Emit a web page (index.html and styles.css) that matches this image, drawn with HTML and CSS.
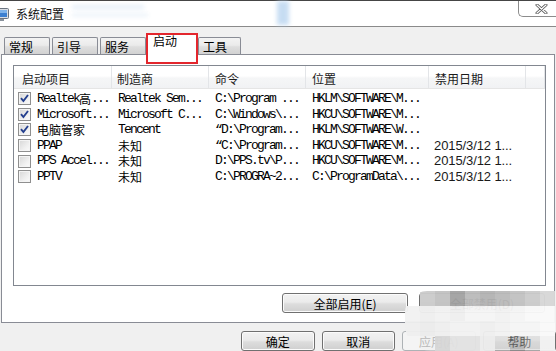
FILE: index.html
```html
<!DOCTYPE html>
<html lang="zh-CN">
<head>
<meta charset="utf-8">
<title>系统配置</title>
<link rel="stylesheet" href="styles.css">
</head>
<body>
<div class="window">
  <div class="titlebar">
    <svg class="appicon" width="16" height="14" viewBox="0 0 16 14">
      <rect x="0.5" y="0.5" width="15" height="10" rx="1" fill="#d9dde3" stroke="#6b7480"/>
      <rect x="2" y="2" width="12" height="7" fill="#3c7fd0"/>
      <rect x="2" y="2" width="12" height="3" fill="#7fb3ea"/>
      <rect x="5" y="11" width="6" height="2" fill="#8a929c"/>
    </svg>
    <span class="title">系统配置</span>
    <div class="close">
      <svg width="13" height="10" viewBox="0 0 13 10">
        <path d="M2 1 L11 9 M11 1 L2 9" stroke="#5a5a5a" stroke-width="3" stroke-linecap="round" fill="none"/>
        <path d="M2 1 L11 9 M11 1 L2 9" stroke="#ffffff" stroke-width="1.2" stroke-linecap="round" fill="none"/>
      </svg>
    </div>
    <div class="smudge sm1"></div>
    <div class="smudge sm2"></div>
    <div class="smudge sm3"></div>
  </div>

  <div class="tabs">
    <div class="tab t1">常规</div>
    <div class="tab t2">引导</div>
    <div class="tab t3">服务</div>
    <div class="tab active">启动</div>
    <div class="tab t5">工具</div>
  </div>

  <div class="panel">
    <div class="listview">
      <div class="lv-head">
        <div class="hc c1">启动项目</div>
        <div class="hc c2">制造商</div>
        <div class="hc c3">命令</div>
        <div class="hc c4">位置</div>
        <div class="hc c5">禁用日期</div>
        <div class="hc rest"></div>
      </div>
      <div class="lv-body">
        <div class="row">
          <div class="cell c1"><span class="cb on"></span>Realtek<span class="zh">高</span>...</div>
          <div class="cell c2">Realtek Sem...</div>
          <div class="cell c3">C:\Program ...</div>
          <div class="cell c4">HKLM\SOFTWARE\M...</div>
          <div class="cell c5"></div>
        </div>
        <div class="row">
          <div class="cell c1"><span class="cb on"></span>Microsoft...</div>
          <div class="cell c2">Microsoft C...</div>
          <div class="cell c3">C:\Windows\...</div>
          <div class="cell c4">HKCU\SOFTWARE\M...</div>
          <div class="cell c5"></div>
        </div>
        <div class="row">
          <div class="cell c1"><span class="cb on"></span><span class="zh">电脑管家</span></div>
          <div class="cell c2">Tencent</div>
          <div class="cell c3">“D:\Program...</div>
          <div class="cell c4">HKLM\SOFTWARE\W...</div>
          <div class="cell c5"></div>
        </div>
        <div class="row">
          <div class="cell c1"><span class="cb"></span>PPAP</div>
          <div class="cell c2"><span class="zh">未知</span></div>
          <div class="cell c3">“C:\Program...</div>
          <div class="cell c4">HKCU\SOFTWARE\M...</div>
          <div class="cell c5 date">2015/3/12 1...</div>
        </div>
        <div class="row">
          <div class="cell c1"><span class="cb"></span>PPS Accel...</div>
          <div class="cell c2"><span class="zh">未知</span></div>
          <div class="cell c3">D:\PPS.tv\P...</div>
          <div class="cell c4">HKCU\SOFTWARE\M...</div>
          <div class="cell c5 date">2015/3/12 1...</div>
        </div>
        <div class="row">
          <div class="cell c1"><span class="cb"></span>PPTV</div>
          <div class="cell c2"><span class="zh">未知</span></div>
          <div class="cell c3">C:\PROGRA~2...</div>
          <div class="cell c4">C:\ProgramData\...</div>
          <div class="cell c5 date">2015/3/12 1...</div>
        </div>
      </div>
    </div>
    <div class="panel-btns">
      <button class="btn wide">全部启用(E)</button>
      <button class="btn wide">全部禁用(D)</button>
    </div>
  </div>

  <div class="dialog-btns">
    <button class="btn">确定</button>
    <button class="btn">取消</button>
    <button class="btn disabled">应用(A)</button>
    <button class="btn">帮助</button>
  </div>

  <div class="mark"></div>

  <div class="mosaic">
    <i class="k0"></i><i class="g3"></i><i class="g4"></i><i class="g9"></i><i class="g5"></i><i class="g6"></i><i class="g5"></i><i class="g4"></i><i class="g3"></i><i class="g2"></i>
    <i class="w2"></i><i class="w1"></i><i class="w2"></i><i class="w1"></i><i class="w3"></i><i class="w3"></i><i class="w2"></i><i class="w3"></i><i class="w4"></i><i class="w4"></i>
    <i class="w1"></i><i class="w0"></i><i class="w1"></i><i class="w2"></i><i class="w2"></i><i class="w1"></i><i class="w2"></i><i class="w3"></i><i class="w3"></i><i class="w4"></i>
    <i class="k0"></i><i class="k1"></i><i class="g2"></i><i class="g1"></i><i class="g1"></i><i class="w0"></i><i class="g2 thin"></i><i class="g9 thin"></i><i class="g2 thin"></i><i class="w2"></i>
  </div>
</div>
</body>
</html>
```

FILE: styles.css
```css
html, body {
  margin: 0;
  padding: 0;
}
body {
  width: 556px;
  height: 351px;
  overflow: hidden;
  background: #f0f0f0;
  font-family: "Noto Sans CJK SC", "Liberation Sans", sans-serif;
  font-size: 12px;
  color: #000;
}
.window {
  position: relative;
  width: 556px;
  height: 351px;
}

/* title bar */
.titlebar {
  position: relative;
  display: flex;
  align-items: flex-start;
  height: 25px;
  background: #fff;
  border-top: 1px solid #454545;
  border-bottom: 1px solid #8a8a8a;
}
.appicon {
  margin: 7px 0 0 -7px;
  flex: none;
}
.title {
  margin-left: 7px;
  line-height: 25px;
  font-size: 12px;
  color: #111;
}
.close {
  margin-left: auto;
  width: 38px;
  height: 16px;
  border-left: 1px solid #8c8c8c;
  border-bottom: 1px solid #8c8c8c;
  border-bottom-left-radius: 5px;
  box-sizing: border-box;
  display: flex;
  justify-content: flex-end;
  padding: 3px 8px 0 0;
}
.smudge {
  position: absolute;
  background: #cfe0f2;
  filter: blur(2px);
  opacity: 0.55;
}
.sm1 { left: 72px; top: 4px; width: 72px; height: 4px; }
.sm2 { left: 72px; top: 12px; width: 76px; height: 4px; opacity: 0.35; }
.sm3 { left: 277px; top: 0; width: 12px; height: 24px; background: #b9d5f0; opacity: 0.8; }

/* tabs */
.tabs {
  position: relative;
  z-index: 1;
  display: flex;
  align-items: flex-end;
  height: 28px;
  margin-bottom: -1px;
  padding-left: 4px;
}
.tab {
  box-sizing: border-box;
  height: 17px;
  border: 1px solid #898c95;
  border-bottom: none;
  border-radius: 2px 2px 0 0;
  background: linear-gradient(#f3f3f3 0%, #ebebeb 45%, #dedede 55%, #d2d2d2 100%);
  padding: 2px 0 0 4px;
  line-height: 14px;
  margin-bottom: 1px;
}
.t1 { width: 46px; margin-right: 2px; }
.t2 { width: 46px; margin-right: 2px; }
.t3 { width: 46px; }
.t5 { width: 43px; }
.tab.active {
  width: 52px;
  height: 22px;
  margin-bottom: 0;
  background: #fff;
  padding: 0 0 0 6px;
}

/* panel */
.panel {
  box-sizing: border-box;
  margin-left: 1px;
  width: 554px;
  height: 269px;
  background: #fff;
  border: 1px solid #898c95;
  padding: 10px 0 0 11px;
}
.listview {
  box-sizing: border-box;
  width: 533px;
  height: 221px;
  border: 1px solid #828790;
  background: #fff;
}
.lv-head {
  display: flex;
  box-sizing: border-box;
  height: 23px;
  border-bottom: 1px solid #e5e5e5;
  background: linear-gradient(#ffffff 0%, #ffffff 45%, #f5f6f7 55%, #f1f2f4 100%);
}
.hc {
  box-sizing: border-box;
  border-right: 1px solid #e3e5e8;
  padding: 3px 0 0 6px;
  line-height: 19px;
  color: #1a1a1a;
  white-space: nowrap;
}
.c1 { width: 98px; }
.c2 { width: 97px; }
.c3 { width: 97px; }
.c4 { width: 123px; }
.c5 { width: 97px; }
.hc.c1 { padding-left: 8px; }
.hc.c2 { padding-left: 5px; }
.hc.rest { flex: 1; }

.lv-body {
  padding-top: 2px;
}
.row {
  display: flex;
  height: 15.6px;
}
.cell {
  box-sizing: border-box;
  display: flex;
  align-items: center;
  white-space: nowrap;
  overflow: hidden;
  padding-left: 6px;
  line-height: 15.6px;
  font-family: "Liberation Mono", "Noto Sans CJK SC", monospace;
  font-size: 13px;
  letter-spacing: -1.8px;
  color: #000;
}
.cell.c1 { padding-left: 4px; }
.cell.c5 { padding-left: 5px; }
.cell.date {
  font-family: "Liberation Sans", sans-serif;
  font-size: 13px;
  letter-spacing: -0.1px;
  color: #1a1a1a;
}
.zh {
  font-family: "Noto Sans CJK SC", sans-serif;
  font-size: 12px;
  letter-spacing: 0;
}
.cb {
  flex: none;
  box-sizing: border-box;
  width: 13px;
  height: 13px;
  margin-right: 6px;
  border: 1px solid #8f8f8f;
  background: linear-gradient(135deg, #d6d6d6 0%, #efefef 60%, #fbfbfb 100%);
  box-shadow: inset 0 0 0 1px #f4f4f4;
}
.cb.on {
  background:
    url("data:image/svg+xml;utf8,<svg xmlns='http://www.w3.org/2000/svg' width='11' height='11' viewBox='0 0 11 11'><path d='M2 5.2 L4.4 8 L9 2' stroke='%23243f8e' stroke-width='1.9' fill='none'/></svg>") center/11px 11px no-repeat,
    linear-gradient(135deg, #d6d6d6 0%, #efefef 60%, #fbfbfb 100%);
}

.panel-btns {
  display: flex;
  justify-content: flex-end;
  gap: 11px;
  margin: 7px 9px 0 0;
}

.btn {
  box-sizing: border-box;
  height: 20px;
  width: 74px;
  padding: 0;
  border: 1px solid #707070;
  border-radius: 3px;
  background: linear-gradient(#f2f2f2 0%, #ebebeb 45%, #dddddd 55%, #cfcfcf 100%);
  box-shadow: inset 0 0 0 1px #fbfbfb;
  font-family: "Noto Sans CJK SC", "Liberation Sans", sans-serif;
  font-size: 12px;
  line-height: 17px;
  color: #000;
}
.btn.wide { width: 126px; }
.btn.disabled {
  color: #9a9a9a;
  border-color: #adb2b5;
  background: #f4f4f4;
  box-shadow: none;
}
.dialog-btns {
  display: flex;
  gap: 7px;
  padding-left: 241px;
  margin-top: 8px;
}

/* annotation rectangle around the selected tab */
.mark {
  position: absolute;
  left: 146px;
  top: 33px;
  width: 52px;
  height: 31px;
  box-sizing: border-box;
  border: 2px solid #e3262d;
  z-index: 3;
}

/* privacy mosaic */
.mosaic {
  position: absolute;
  left: 405px;
  top: 291px;
  width: 151px;
  height: 60px;
  display: grid;
  grid-template-columns: repeat(10, 15px);
  grid-auto-rows: 15px;
  border-radius: 22px 0 0 26px;
  overflow: hidden;
  z-index: 4;
}
.mosaic i { display: block; opacity: 0.96; }
.mosaic i.thin { opacity: 0.55; }
.k0 { background: transparent; }
.k1 { background: rgba(236, 236, 236, 0.4); }
.w0 { background: #ebebeb; }
.w1 { background: #eeeeee; }
.w2 { background: #f1f1f1; }
.w3 { background: #f5f5f5; }
.w4 { background: #f9f9f9; }
.g1 { background: #e2e2e2; }
.g2 { background: #d6d6d6; }
.g3 { background: #cbcbcb; }
.g4 { background: #c2c2c2; }
.g5 { background: #bababa; }
.g6 { background: #b3b3b3; }
.g9 { background: #a2a2a2; }
```
